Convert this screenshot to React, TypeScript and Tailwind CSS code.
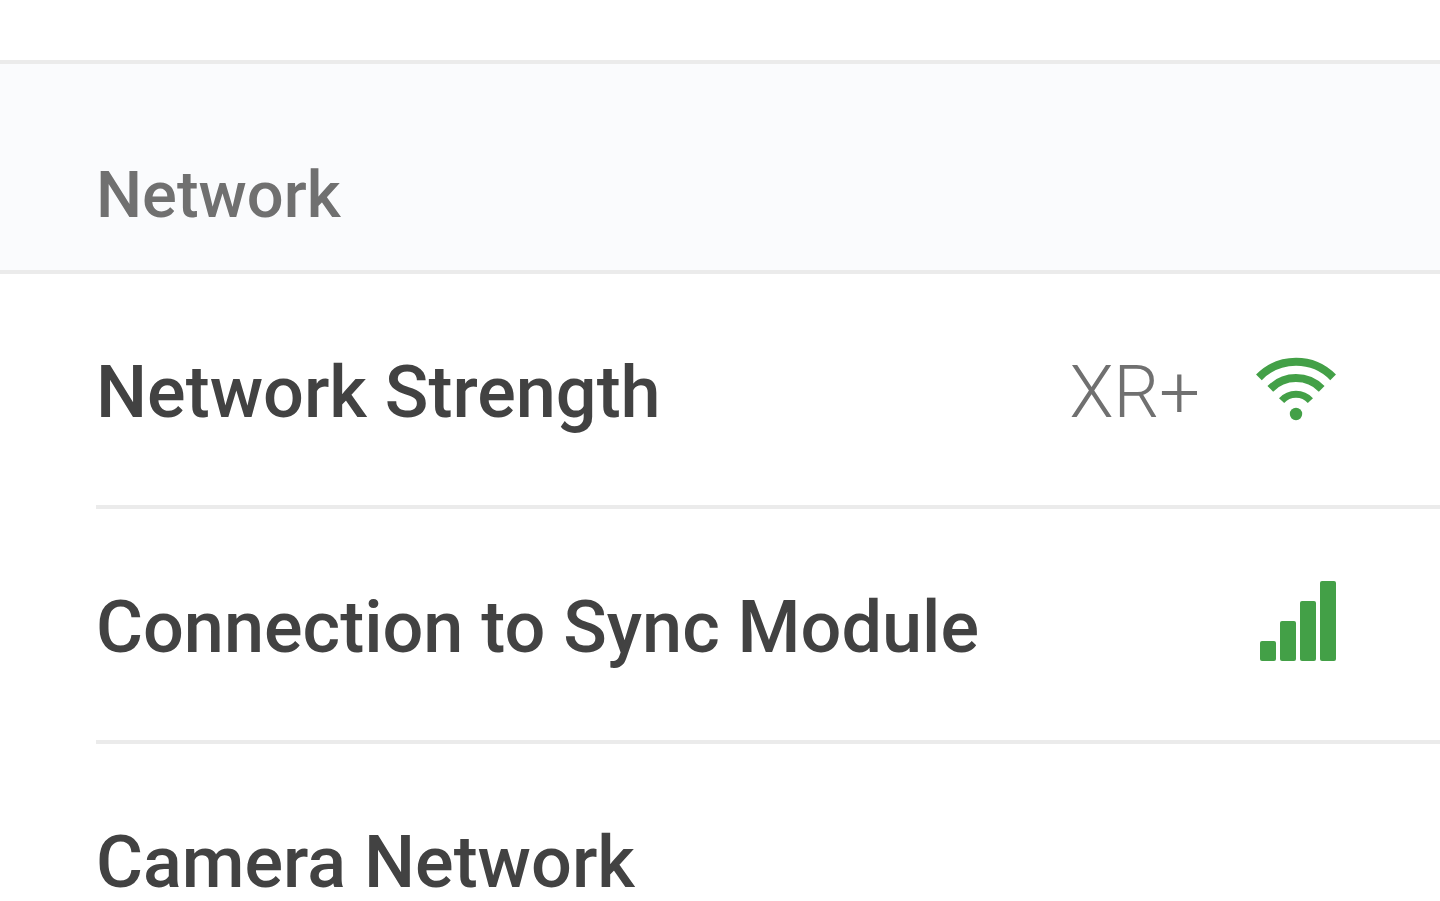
import type { ReactNode } from "react";

interface RowProps {
  label: string;
  children?: ReactNode;
}

function WifiIcon() {
  return (
    <svg
      role="img"
      aria-label="Strong Wi-Fi signal"
      viewBox="0 0 80 71"
      className="w-20 shrink-0 fill-none stroke-[#43a047]"
      strokeWidth="8"
    >
      <path d="M2.9 20.4A52 52 0 0 1 77.1 20.4" />
      <path d="M14.3 31.9A36 36 0 0 1 65.7 31.9" />
      <path d="M25.6 43.6A19.4 19.4 0 0 1 54.4 43.6" strokeWidth="7" />
      <circle cx="40" cy="57" r="6.2" className="fill-[#43a047] stroke-none" />
    </svg>
  );
}

function SignalBarsIcon() {
  return (
    <svg
      role="img"
      aria-label="Full signal"
      viewBox="0 0 76 93"
      className="w-19 shrink-0 fill-[#43a047]"
    >
      <rect x="0" y="60" width="16" height="20" rx="2" />
      <rect x="20" y="40" width="16" height="40" rx="2" />
      <rect x="40" y="20" width="16" height="60" rx="2" />
      <rect x="60" y="0" width="16" height="80" rx="2" />
    </svg>
  );
}

function SettingsRow(props: RowProps) {
  return (
    <li className="ml-24 flex h-[235px] items-center justify-between border-b-4 border-[#ebebeb] pt-1.5 pr-26">
      <h3 className="text-[72px] leading-18 font-medium text-[#424242]">{props.label}</h3>
      <div className="flex items-center gap-14">{props.children}</div>
    </li>
  );
}

export default function App() {
  return (
    <main className="h-screen overflow-y-auto bg-white font-[Roboto,sans-serif] [scrollbar-width:none]">
      <section className="pt-15">
        <header className="border-y-4 border-[#ebebeb] bg-[#fafbfd] px-24 pt-24 pb-10">
          <h2 className="text-[65px] leading-[70px] font-medium text-[#707070]">Network</h2>
        </header>
        <ul>
          <SettingsRow label="Network Strength">
            <span className="text-[72px] leading-18 font-light text-[#707070]">XR+</span>
            <WifiIcon />
          </SettingsRow>
          <SettingsRow label="Connection to Sync Module">
            <SignalBarsIcon />
          </SettingsRow>
          <SettingsRow label="Camera Network" />
        </ul>
      </section>
    </main>
  );
}
